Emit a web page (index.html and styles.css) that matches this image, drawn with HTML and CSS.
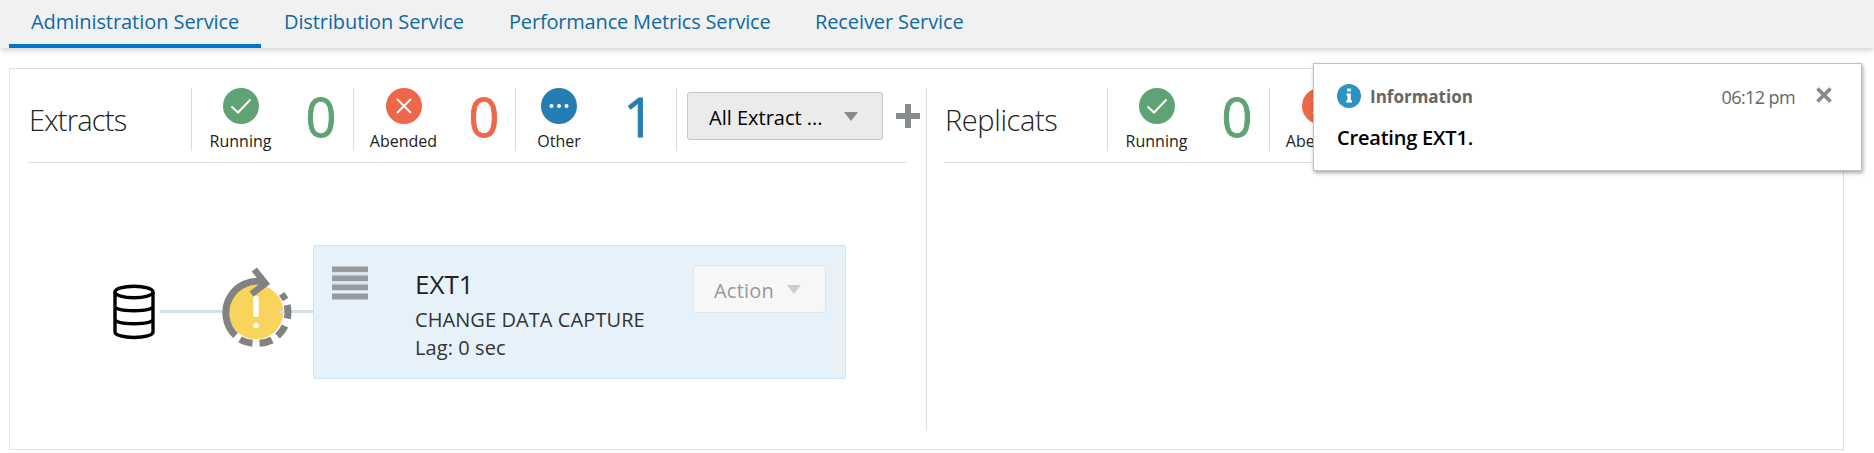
FILE: index.html
```html
<!DOCTYPE html>
<html lang="en">
<head>
<meta charset="utf-8">
<title>Administration Service</title>
<link rel="stylesheet" href="styles.css">
</head>
<body>
<nav class="tabs">
  <a class="tab tab-active"><span>Administration Service</span></a>
  <a class="tab tab-dist"><span>Distribution Service</span></a>
  <a class="tab tab-perf"><span>Performance Metrics Service</span></a>
  <a class="tab"><span>Receiver Service</span></a>
</nav>
<main class="panel">
  <section class="column column-left">
    <header class="summary">
      <h2 class="title title-tight">Extracts</h2>
      <div class="stat green">
        <div class="stat-state">
          <svg class="badge" viewBox="0 0 36 36"><circle cx="18" cy="18" r="18" fill="currentColor"/><path d="M8.500 18.500l6.500 6L27.500 11.500" fill="none" stroke="#fff" stroke-width="2"/></svg>
          <span class="label">Running</span>
        </div>
        <span class="count">0</span>
      </div>
      <div class="stat red">
        <div class="stat-state">
          <svg class="badge" viewBox="0 0 36 36"><circle cx="18" cy="18" r="18" fill="currentColor"/><path d="M11 11l14 14M25 11L11 25" fill="none" stroke="#fff" stroke-width="2"/></svg>
          <span class="label">Abended</span>
        </div>
        <span class="count">0</span>
      </div>
      <div class="stat blue">
        <div class="stat-state">
          <svg class="badge" viewBox="0 0 36 36"><circle cx="18" cy="18" r="18" fill="currentColor"/><g fill="#fff"><circle cx="10.500" cy="18" r="2"/><circle cx="18" cy="18" r="2"/><circle cx="25.500" cy="18" r="2"/></g></svg>
          <span class="label">Other</span>
        </div>
        <span class="count">1</span>
      </div>
      <div class="tools">
        <button class="select"><span>All Extract ...</span><svg width="14" height="9" viewBox="0 0 14 9"><path d="M0 0h14L7 9z" fill="#878b8e"/></svg></button>
        <svg class="plus" width="24" height="24" viewBox="0 0 24 24"><path d="M12 0v24M0 12h24" stroke="#878b8e" stroke-width="6"/></svg>
      </div>
    </header>
    <div class="flow">
      <svg class="database" width="42" height="56" viewBox="0 0 42 56" fill="none" stroke="#000" stroke-width="3.400"><ellipse cx="21" cy="8" rx="19" ry="5.700"/><path d="M2 8v40c0 3.200 8.500 5.500 19 5.500s19-2.300 19-5.500V8M2 22c0 3.200 8.500 4.700 19 4.700S40 25.200 40 22M2 35c0 3.200 8.500 4.700 19 4.700S40 38.200 40 35"/></svg>
      <svg class="status" width="154" height="84" viewBox="160 266 154 84">
        <path d="M160 311.500h62M291 311.500h23" stroke="#d5dfe8" stroke-width="3"/>
        <circle cx="256" cy="312" r="27.300" fill="#f9d45c"/>
        <path d="M281 311.500h10" stroke="#d5dfe8" stroke-width="3" stroke-linecap="round"/>
        <path d="M235.500 335.500A31.500 31.500 0 0 1 264 282" fill="none" stroke="#828282" stroke-width="7"/>
        <path d="M254.300 269.500L265.500 283.500L251.500 294" fill="none" stroke="#828282" stroke-width="6.500"/>
        <path d="M281 298.500L286.300 294.800M287.200 305A32 32 0 0 1 287.300 318.500M285 326A32 32 0 0 1 277.500 336M272 340A32 32 0 0 1 259.500 343.300M252.500 343.300A32 32 0 0 1 240 339.500" fill="none" stroke="#828282" stroke-width="7"/>
        <path d="M256 298.500v16" stroke="#fff" stroke-width="5.500" stroke-linecap="round"/>
        <circle cx="256" cy="325.500" r="2.800" fill="#fff"/>
      </svg>
      <article class="card">
        <svg class="menu" width="36" height="34" viewBox="0 0 36 34"><path d="M0 3h36M0 12h36M0 21h36M0 30.500h36" stroke="#bfc5ca" stroke-width="7"/><path d="M0 3.500h36M0 12.500h36M0 21.500h36M0 30.500h36" stroke="#979b9f" stroke-width="5"/></svg>
        <div class="details">
          <h3 class="name"><span>EXT1</span></h3>
          <p class="type">CHANGE DATA CAPTURE</p>
          <p class="lag">Lag: 0 sec</p>
        </div>
        <button class="action" disabled><span>Action</span><svg width="14" height="9" viewBox="0 0 14 9"><path d="M0 0h14L7 9z" fill="#cbcccd"/></svg></button>
      </article>
    </div>
  </section>
  <section class="column column-right">
    <header class="summary">
      <h2 class="title">Replicats</h2>
      <div class="stat green">
        <div class="stat-state">
          <svg class="badge" viewBox="0 0 36 36"><circle cx="18" cy="18" r="18" fill="currentColor"/><path d="M8.500 18.500l6.500 6L27.500 11.500" fill="none" stroke="#fff" stroke-width="2"/></svg>
          <span class="label">Running</span>
        </div>
        <span class="count">0</span>
      </div>
      <div class="stat red">
        <div class="stat-state">
          <svg class="badge" viewBox="0 0 36 36"><circle cx="18" cy="18" r="18" fill="currentColor"/><path d="M11 11l14 14M25 11L11 25" fill="none" stroke="#fff" stroke-width="2"/></svg>
          <span class="label">Abended</span>
        </div>
      </div>
    </header>
  </section>
</main>
<aside class="toast">
  <div class="toast-head">
    <svg class="info" width="24" height="24" viewBox="0 0 24 24"><circle cx="12" cy="12" r="12" fill="#2b93c0"/><path d="M10.200 4.500h3.600v3h-3.600zM9.500 9.500h4.300v7h1.200v2h-5.800v-2h1.200v-5h-.9z" fill="#fff"/></svg>
    <span class="toast-type">Information</span>
    <span class="toast-time">06:12 pm</span>
    <svg class="close" width="16" height="16" viewBox="0 0 16 16"><path d="M1.500 1.500l13 13M14.500 1.500l-13 13" stroke="#878b8e" stroke-width="3.800"/></svg>
  </div>
  <p class="toast-text"><span>Creating EXT1.</span></p>
</aside>
</body>
</html>
```
FILE: styles.css
```css
* { box-sizing: border-box; }
body {
  margin: 0;
  width: 1874px;
  height: 453px;
  overflow: hidden;
  background: #fff;
  color: #222;
  font-family: "Open Sans", "Noto Sans", sans-serif;
  font-size: 20px;
  font-stretch: 90%;
}
h2, h3, p { margin: 0; font-weight: 400; }
svg { display: block; flex: none; }
button { font: inherit; font-stretch: inherit; }

.tabs {
  display: flex;
  height: 48px;
  padding-left: 9px;
  background: #f1f1f1;
  box-shadow: 0 2px 6px rgba(0, 0, 0, .2);
  color: #0f69a5;
}
.tab {
  display: flex;
  height: 48px;
  padding: 8px 23px 0;
  line-height: 28px;
  letter-spacing: -.1px;
  white-space: nowrap;
}
.tab-active { width: 252px; padding-left: 22px; border-bottom: 4px solid #0077cc; letter-spacing: -.06px; }
.tab-dist { width: 225px; }
.tab-perf { width: 306px; letter-spacing: -.18px; }

.panel {
  display: flex;
  width: 1835px;
  height: 382px;
  margin: 20px 0 0 9px;
  padding: 19px 17px 0 18px;
  border: 1px solid #dfe0e2;
}
.column-left {
  flex: none;
  width: 899px;
  height: 343px;
  padding-right: 19px;
  border-right: 1px solid #d6dce2;
}
.column-right { flex: 1; padding-left: 17px; }
.summary {
  display: flex;
  height: 75px;
  border-bottom: 1px solid #dfe0e2;
}
.title {
  flex: none;
  width: 163px;
  padding: 12px 0 0 1px;
  font-size: 29px;
  font-weight: 300;
  line-height: 40px;
  letter-spacing: -.4px;
}
.title-tight { letter-spacing: -.8px; }
.stat {
  display: flex;
  flex: none;
  width: 162px;
  height: 63px;
  border-left: 1px solid #d6dce2;
}
.blue { width: 161px; }
.stat-state {
  display: flex;
  flex: none;
  flex-direction: column;
  align-items: center;
  width: 97px;
}
.red .stat-state { width: 99px; }
.blue .stat-state { width: 86px; }
.badge { width: 36px; height: 36px; }
.label { color: #222; font-size: 16px; line-height: 22px; padding-top: 6px; }
.count {
  width: 64px;
  font-size: 54px;
  line-height: 57px;
  text-align: center;
  -webkit-text-stroke: .9px currentColor;
}
.red .count { width: 62px; }
.blue .count { width: 74px; }
.green { color: #5fa375; }
.red { color: #ee6748; }
.blue { color: #267db3; }
.tools {
  display: flex;
  flex: none;
  height: 63px;
  padding: 4px 0 0 10px;
  border-left: 1px solid #d6dce2;
}
.select {
  display: flex;
  align-items: center;
  justify-content: space-between;
  width: 196px;
  height: 48px;
  padding: 0 24px 0 21px;
  border: 1px solid #c4c7ca;
  border-radius: 3px;
  background: #ebebeb;
  color: #000;
  white-space: nowrap;
}
.select span, .action span { padding-top: 2px; }
.plus { margin: 12px 0 0 13px; }

.flow { display: flex; padding: 82px 0 0 85px; }
.database { margin: 39px 5px 0 0; }
.status { margin-top: 21px; }
.card {
  display: flex;
  flex: none;
  width: 533px;
  height: 134px;
  margin-left: -1px;
  border: 1px solid #cde4f7;
  border-radius: 2px;
  background: #e7f1fa;
}
.menu { margin: 20px 0 0 18px; }
.details { width: 277px; padding: 19px 0 0 47px; white-space: nowrap; }
.name { height: 41px; font-size: 26px; line-height: 38px; }
.type, .lag { color: #333; line-height: 28px; letter-spacing: .08px; }
.action {
  display: flex;
  align-items: center;
  justify-content: space-between;
  width: 133px;
  height: 48px;
  margin: 19px 0 0 48px;
  padding: 0 24px 0 20px;
  border: 1px solid #e2e5e8;
  border-radius: 3px;
  background: #f7f7f7;
  color: #999;
  letter-spacing: .2px;
}

.toast {
  position: absolute;
  left: 1313px;
  top: 63px;
  width: 549px;
  height: 108px;
  padding: 20px 29px 0 23px;
  border: 1px solid #bfc1c3;
  background: #fff;
  box-shadow: 1px 2px 4px rgba(0, 0, 0, .35);
}
.toast-head { display: flex; align-items: center; height: 25px; }
.info { margin-bottom: 1px; }
.close { margin-bottom: 3px; }
.toast-type { margin-left: 9px; color: #666; font-size: 17px; font-weight: 700; }
.toast-time { margin: 0 21px 0 auto; color: #666; font-size: 18px; letter-spacing: -.6px; }
.toast-text { padding-top: 15px; color: #000; font-weight: 600; line-height: 28px; letter-spacing: -.2px; }
```
